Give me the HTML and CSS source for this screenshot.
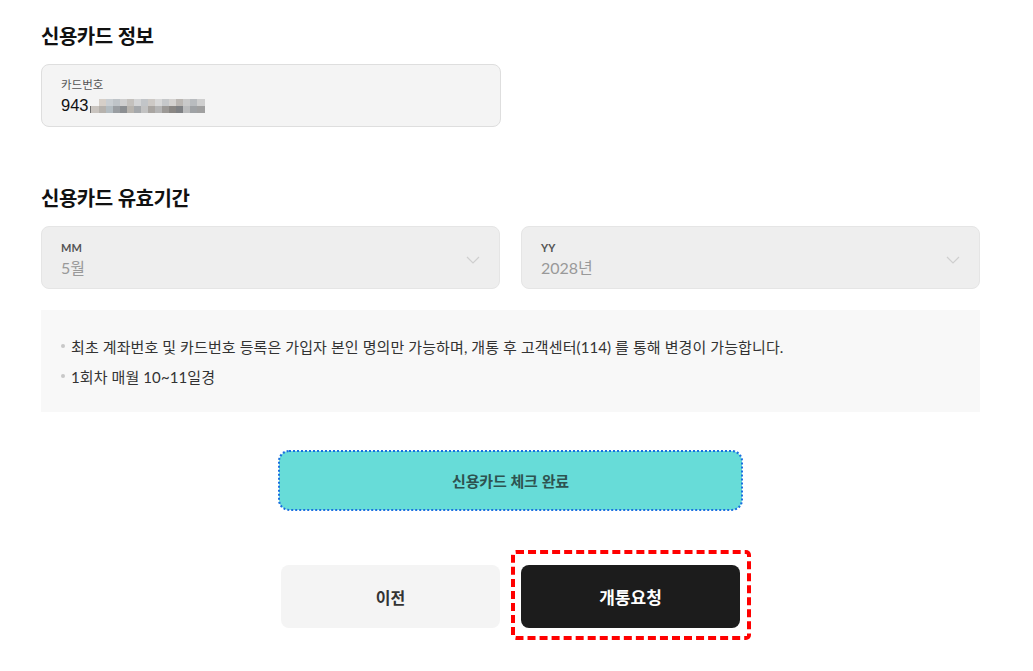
FILE: index.html
```html
<!DOCTYPE html>
<html lang="ko">
<head>
<meta charset="utf-8">
<link rel="stylesheet" href="styles.css">
</head>
<body>
<div class="page">
  <h2 class="title">신용카드 정보</h2>
  <div class="field card-field">
    <div class="label">카드번호</div>
    <div class="value num">943<span class="mosaic"></span></div>
  </div>

  <h2 class="title title-exp">신용카드 유효기간</h2>
  <div class="selects">
    <div class="field select">
      <div class="sel-text">
        <div class="label bold">MM</div>
        <div class="value muted">5월</div>
      </div>
      <svg class="chev" width="14" height="8" viewBox="0 0 14 8"><path d="M1 1l6 6 6-6" fill="none" stroke="#cfcfcf" stroke-width="1.2"/></svg>
    </div>
    <div class="field select">
      <div class="sel-text">
        <div class="label bold">YY</div>
        <div class="value muted">2028년</div>
      </div>
      <svg class="chev" width="14" height="8" viewBox="0 0 14 8"><path d="M1 1l6 6 6-6" fill="none" stroke="#cfcfcf" stroke-width="1.2"/></svg>
    </div>
  </div>

  <ul class="notes">
    <li>최초 계좌번호 및 카드번호 등록은 가입자 본인 명의만 가능하며, 개통 후 고객센터(114) 를 통해 변경이 가능합니다.</li>
    <li>1회차 매월 10~11일경</li>
  </ul>

  <div class="check-row">
    <button class="check-btn">신용카드 체크 완료</button>
  </div>

  <div class="actions">
    <button class="btn btn-prev">이전</button>
    <div class="highlight">
      <button class="btn btn-submit">개통요청</button>
    </div>
  </div>
</div>
</body>
</html>
```

FILE: styles.css
```css
* { box-sizing: border-box; }
html, body { margin: 0; padding: 0; background: #fff; }
body {
  font-family: "Noto Sans CJK KR", "Noto Sans", sans-serif;
  color: #222;
}
.page {
  width: 939px;
  margin-left: 41px;
  padding-top: 22px;
  padding-bottom: 60px;
}
.title {
  margin: 0;
  font-size: 20px;
  line-height: 28px;
  font-weight: 700;
  color: #111;
  letter-spacing: -0.5px;
}
.title-exp { margin-top: 57px; }
.field {
  background: #f4f4f4;
  border: 1px solid #dedede;
  border-radius: 8px;
  height: 63px;
  padding: 10px 19px;
}
.card-field {
  width: 460px;
  margin-top: 14px;
  padding-top: 11px;
}
.label {
  font-size: 11.5px;
  line-height: 17px;
  color: #555;
}
.label.bold { font-weight: 700; color: #555; font-family: "Lato", "Noto Sans CJK KR", sans-serif; font-size: 11px; }
.value {
  font-size: 16px;
  line-height: 24px;
  color: #111;
  display: flex;
  align-items: center;
  font-family: "Lato", "Noto Sans CJK KR", sans-serif;
}
.value.num { font-family: "Liberation Sans", Arial, sans-serif; font-size: 16.5px; }
.value.muted { color: #999; }
.mosaic {
  display: inline-block;
  width: 116px;
  height: 14px;
  margin-top: 2px;
  background:
    linear-gradient(90deg,
      #ffffff00 0 10px, #d6cfc8 10px 17px, #c9ced2 17px 24px, #bfc4c8 24px 31px,
      #cfcfcf 31px 38px, #c4c1bd 38px 45px, #d3d4d5 45px 52px, #c2c5c8 52px 59px,
      #cdc9c5 59px 66px, #d8d8d8 66px 73px, #c6c8ca 73px 80px, #d4d2d0 80px 87px,
      #bbb7b3 87px 94px, #c9c9c9 94px 101px, #b9bcbf 101px 108px, #cfcfcf 108px 116px)
      top left / 100% 7px no-repeat,
    linear-gradient(90deg,
      #ffffff00 0 1px, #6d6d6d 1px 2px, #c9c4bf 2px 10px, #b6b2ad 10px 17px, #b3bcc1 17px 24px, #9a9ea2 24px 31px,
      #8c8f92 31px 38px, #b8b4ae 38px 45px, #a5a8ab 45px 52px, #c2c2c2 52px 59px,
      #a9a5a1 59px 66px, #b5b5b5 66px 73px, #9c9996 73px 80px, #8a8784 80px 87px,
      #7f8184 87px 94px, #bbbcbd 94px 101px, #9fa2a5 101px 108px, #a0a0a0 108px 116px)
      bottom left / 100% 7px no-repeat;
}
.selects {
  display: flex;
  gap: 21px;
  margin-top: 14px;
}
.select {
  flex: 1;
  background: #eeeeee;
  border-color: #e5e5e5;
  display: flex;
  align-items: center;
  justify-content: space-between;
  padding-top: 12px;
  padding-bottom: 8px;
  padding-right: 19px;
}
.chev { margin-top: 0; }
.notes {
  list-style: none;
  margin: 21px 0 0;
  padding: 22px 20px 20px 20px;
  background: #f8f8f8;
  height: 102px;
  font-family: "Lato", "Noto Sans CJK KR", sans-serif;
  font-size: 15px;
  line-height: 30px;
  color: #333;
  letter-spacing: 0.1px;
}
.notes li {
  position: relative;
  padding-left: 10px;
}
.notes li::before {
  content: "";
  position: absolute;
  left: 0;
  top: 12px;
  width: 4px;
  height: 4px;
  border-radius: 50%;
  background: #c8c8c8;
}
.check-row {
  display: flex;
  justify-content: center;
  margin-top: 39px;
}
.check-btn {
  width: 463px;
  height: 59px;
  border: none;
  border-radius: 10px;
  background: #67dcd8;
  outline: 2px dotted #1a6fe0;
  outline-offset: -1px;
  font-family: "Noto Sans CJK KR", sans-serif;
  font-size: 15px;
  font-weight: 700;
  color: #2e5350;
  letter-spacing: -0.2px;
}
.actions {
  display: flex;
  justify-content: center;
  align-items: flex-start;
  gap: 21px;
  margin-top: 55px;
}
.btn {
  width: 219px;
  height: 63px;
  border: none;
  border-radius: 8px;
  font-family: "Noto Sans CJK KR", sans-serif;
  font-size: 17px;
  font-weight: 700;
  display: block;
}
.btn-prev { background: #f4f4f4; color: #333; font-size: 16px; }
.btn-submit { background: #1c1c1c; color: #fff; }
.highlight {
  margin: -15px -11px -12px -10px;
  padding: 11px 7px 8px 6px;
  border: 4px dashed #ff0000;
  border-radius: 5px;
}
```
